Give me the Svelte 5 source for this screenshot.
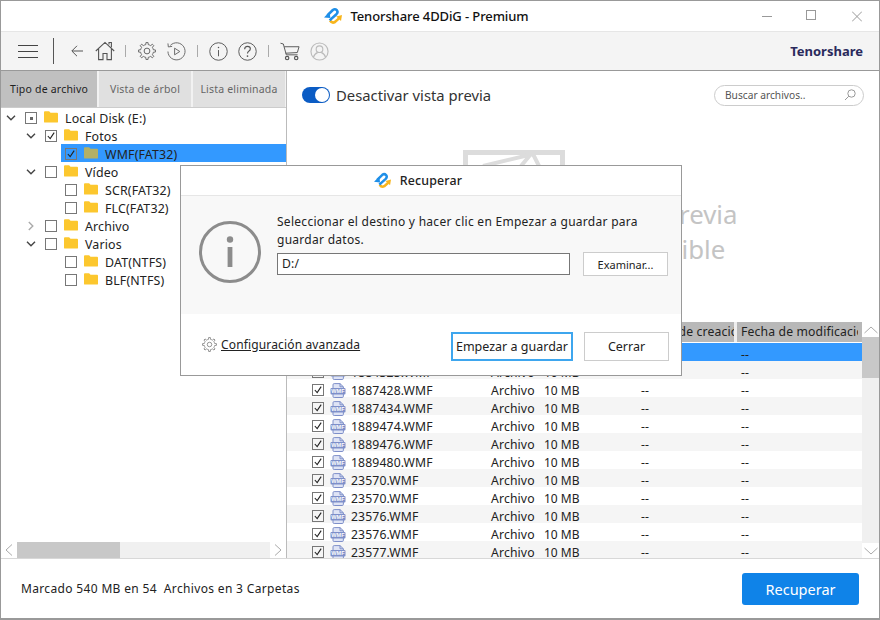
<script lang="ts">
    const tree = [
        { level: 0, chevron: "down", check: "partial", label: "Local Disk (E:)" },
        { level: 1, chevron: "down", check: "on", label: "Fotos" },
        { level: 2, chevron: "", check: "on", label: "WMF(FAT32)", selected: true },
        { level: 1, chevron: "down", check: "off", label: "Vídeo" },
        { level: 2, chevron: "", check: "off", label: "SCR(FAT32)" },
        { level: 2, chevron: "", check: "off", label: "FLC(FAT32)" },
        { level: 1, chevron: "right", check: "off", label: "Archivo" },
        { level: 1, chevron: "down", check: "off", label: "Varios" },
        { level: 2, chevron: "", check: "off", label: "DAT(NTFS)" },
        { level: 2, chevron: "", check: "off", label: "BLF(NTFS)" },
    ];

    const files = [
        "1884321.WMF", "1884325.WMF", "1887428.WMF", "1887434.WMF", "1889474.WMF",
        "1889476.WMF", "1889480.WMF", "23570.WMF", "23570.WMF", "23576.WMF",
        "23576.WMF", "23577.WMF",
    ];

    function gearPath(cx: number, cy: number, r1: number, r2: number, teeth: number) {
        let d = "";
        const step = (Math.PI * 2) / teeth;
        for (let i = 0; i < teeth; i++) {
            const a = i * step;
            const pts = [
                [r2, a - step * 0.5],
                [r2, a - step * 0.25],
                [r1, a - step * 0.14],
                [r1, a + step * 0.14],
                [r2, a + step * 0.25],
            ];
            for (const [r, t] of pts) {
                const x = (cx + r * Math.cos(t)).toFixed(2);
                const y = (cy + r * Math.sin(t)).toFixed(2);
                d += (d ? "L" : "M") + x + " " + y;
            }
        }
        return d + "Z";
    }
</script>

{#snippet logo(size)}
    <svg width={size} height={size} viewBox="0 0 18 18">
        <path d="M6 13.5 Q8 16.6 11 15 L15 11.4" fill="none" stroke="#f8b51c" stroke-width="2.6" />
        <path d="M12.2 9.4 L18 8 L17 14 Z" fill="#f8b51c" />
        <path d="M3.4 8.4 L8.8 3 Q11 1.4 12.8 3.2 Q14.4 5.2 12.4 7.2 L5.6 13.4" fill="none" stroke="#1f8fe8" stroke-width="2.6" />
        <path d="M0 10.4 L5.6 4.8 L6.4 11 Z" fill="#1f8fe8" />
    </svg>
{/snippet}

{#snippet checkbox(state)}
    <span class="cb">
        {#if state === "on"}
            <svg width="10" height="10" viewBox="0 0 11 11"><path d="M2 5.5 L4.6 8.4 L9 1.8" fill="none" stroke="#222" stroke-width="1.2" /></svg>
        {:else if state === "partial"}
            <span class="cb-dot"></span>
        {/if}
    </span>
{/snippet}

{#snippet folder(dim)}
    <svg class="folder" width="14" height="13" viewBox="0 0 15 13">
        <path d="M0 2 Q0 1 1 1 L5.5 1 L7 2.6 L14 2.6 Q15 2.6 15 3.6 L15 12 Q15 13 14 13 L1 13 Q0 13 0 12 Z" fill={dim ? "#b3b066" : "#fcc72e"} />
    </svg>
{/snippet}

{#snippet wmfIcon()}
    <svg class="wmf" width="16" height="15" viewBox="0 0 16 15">
        <path d="M3 13.5 L3 1.8 Q3 .6 4.2 .6 L10 .6 L13.4 3.8 L13.4 13.3 Q13.4 14.5 12.2 14.5 L4.2 14.5 Q3 14.5 3 13.5 Z" fill="#dfe4f5" stroke="#7e8fc9" stroke-width="1" />
        <path d="M10 .6 L10 3.8 L13.4 3.8" fill="none" stroke="#7e8fc9" stroke-width="1" />
        <rect x="0.5" y="5" width="15" height="6.4" rx="1" fill="#7e8fc9" />
        <text x="8" y="10.4" text-anchor="middle" class="wmf-text">WMF</text>
    </svg>
{/snippet}

<div class="app">
    <div class="titlebar">
        <div class="title">
            {@render logo(18)}
            <span>Tenorshare 4DDiG - Premium</span>
        </div>
        <div class="win-buttons">
            <svg width="10" height="12" viewBox="0 0 10 12"><path d="M0 6.5 H10" stroke="#999" fill="none" /></svg>
            <svg width="10" height="12" viewBox="0 0 10 12"><rect x=".5" y=".5" width="9" height="9" stroke="#999" fill="none" /></svg>
            <svg width="10" height="12" viewBox="0 0 10 12"><path d="M0 1.5 L10 11.5 M10 1.5 L0 11.5" stroke="#999" fill="none" /></svg>
        </div>
    </div>

    <div class="toolbar">
        <svg class="tb-menu" width="20" height="13" viewBox="0 0 20 13"><path d="M0 .5 H20 M0 6.5 H20 M0 12.5 H20" stroke="#444" fill="none" /></svg>
        <span class="sep-tall"></span>
        <svg class="tb-back" width="12" height="12" viewBox="0 0 12 12"><path d="M12 6 H1 M6 .8 L.8 6 L6 11.2" stroke="#555" fill="none" /></svg>
        <svg class="tb-home" width="20" height="20" viewBox="0 0 20 20">
            <path d="M.8 10 L10 1.4 L19.2 10 M3.6 8 V18.6 H8 V12.5 H12 V18.6 H16.4 V8 M14 3.6 V1.5 H16.4 V6.2" fill="none" stroke="#555" stroke-width="1.1" />
        </svg>
        <span class="sep s1"></span>
        <svg class="tb-gear" width="18" height="18" viewBox="0 0 20 20">
            <path d={gearPath(10, 10, 9.6, 7.2, 8)} fill="none" stroke="#666" stroke-width="1.1" />
            <circle cx="10" cy="10" r="3.2" fill="none" stroke="#666" stroke-width="1.1" />
        </svg>
        <svg class="tb-replay" width="19" height="19" viewBox="0 0 20 20">
            <path d="M3.5 3.6 A9 9 0 1 1 1 10" fill="none" stroke="#666" />
            <path d="M1 1.5 L1.4 5.2 L5.4 4.6" fill="none" stroke="#666" />
            <path d="M8 6.5 L13.5 10 L8 13.5 Z" fill="none" stroke="#666" />
        </svg>
        <span class="sep s2"></span>
        <svg class="tb-info" width="19" height="19" viewBox="0 0 20 20">
            <circle cx="10" cy="10" r="9.2" fill="none" stroke="#555" />
            <path d="M10 8.5 V15" stroke="#555" fill="none" />
            <circle cx="10" cy="5.8" r=".8" fill="#555" />
        </svg>
        <svg class="tb-help" width="19" height="19" viewBox="0 0 20 20">
            <circle cx="10" cy="10" r="9.2" fill="none" stroke="#555" />
            <path d="M7 7.5 Q7 4.6 10 4.6 Q13 4.6 13 7.2 Q13 8.8 11.3 9.7 Q10 10.4 10 12.2" stroke="#555" stroke-width="1.2" fill="none" />
            <circle cx="10" cy="14.8" r=".9" fill="#555" />
        </svg>
        <span class="sep s3"></span>
        <svg class="tb-cart" width="20" height="19" viewBox="0 0 21 19">
            <path d="M0.5 0.8 L3.5 1.6 L6.6 13 H18.5 M4.5 4.5 H20 L18.2 10.6 L6 11.3" fill="none" stroke="#555" />
            <circle cx="7.5" cy="16.4" r="1.8" fill="none" stroke="#555" stroke-width="1.2" />
            <circle cx="17" cy="16.4" r="1.8" fill="none" stroke="#555" stroke-width="1.2" />
        </svg>
        <svg class="tb-user" width="19" height="19" viewBox="0 0 20 20">
            <circle cx="10" cy="10" r="9" fill="none" stroke="#bbb" stroke-width="1.2" />
            <circle cx="10" cy="7.6" r="3.5" fill="none" stroke="#bbb" stroke-width="1.2" />
            <path d="M3.6 16 Q5 12 8 11.2 M16.4 16 Q15 12 12 11.2" fill="none" stroke="#bbb" stroke-width="1.2" />
        </svg>
        <span class="brand">Tenorshare</span>
    </div>

    <div class="main">
        <aside class="side">
            <div class="tabs">
                <div class="tab active">Tipo de archivo</div>
                <div class="tab">Vista de árbol</div>
                <div class="tab">Lista eliminada</div>
            </div>
            <div class="tree">
                {#each tree as node}
                    <div class="node level-{node.level}">
                        <span class="chev">
                            {#if node.chevron === "down"}
                                <svg width="10" height="6" viewBox="0 0 10 6"><path d="M1 .8 L5 4.8 L9 .8" fill="none" stroke="#444" stroke-width="1.4" /></svg>
                            {:else if node.chevron === "right"}
                                <svg width="6" height="10" viewBox="0 0 6 10"><path d="M.8 1 L4.8 5 L.8 9" fill="none" stroke="#aaa" stroke-width="1.4" /></svg>
                            {/if}
                        </span>
                        <div class="node-body" class:selected={node.selected}>
                            {@render checkbox(node.check)}
                            {@render folder(node.selected)}
                            <span class="node-label">{node.label}</span>
                        </div>
                    </div>
                {/each}
            </div>
            <div class="hscroll">
                <span class="sb-arrow"><svg width="8" height="12" viewBox="0 0 8 12"><path d="M7 .5 L1 6 L7 11.5" fill="none" stroke="#aaa" /></svg></span>
                <span class="hthumb"></span>
                <span class="sb-arrow"><svg width="8" height="12" viewBox="0 0 8 12"><path d="M1 .5 L7 6 L1 11.5" fill="none" stroke="#aaa" /></svg></span>
            </div>
        </aside>

        <section class="content">
            <div class="preview">
                <div class="preview-head">
                    <span class="toggle"><span class="knob"></span></span>
                    <span class="toggle-label">Desactivar vista previa</span>
                    <div class="search">
                        <span>Buscar archivos..</span>
                        <svg width="12" height="12" viewBox="0 0 12 12"><circle cx="7.5" cy="4.5" r="3.7" fill="none" stroke="#999" /><path d="M4.8 7.2 L1 11" stroke="#999" fill="none" /></svg>
                    </div>
                </div>
                <div class="placeholder">
                    <svg width="102" height="34" viewBox="0 0 102 34">
                        <path d="M2.5 34 V2.5 H99.5 V34" fill="none" stroke="#dcdcdc" stroke-width="5" />
                        <path d="M20 16 L70 4 L76 16 M68 4 L58 16" fill="none" stroke="#dcdcdc" stroke-width="4" />
                    </svg>
                    <div class="placeholder-text">Este archivo no admite la vista previa<br />Esta vista previa no está disponible</div>
                </div>
            </div>

            <div class="listing">
                <div class="table">
                    <div class="thead">
                        <div class="th c-name">Nombre</div>
                        <div class="th c-type">Tipo</div>
                        <div class="th c-size">Tamaño</div>
                        <div class="th c-date">Fecha de creación</div>
                        <div class="th c-mod">Fecha de modificación</div>
                    </div>
                    {#each files as file, i}
                        <div class="tr" class:hilite={i === 0} class:alt={i % 2 === 1}>
                            <div class="c-name cell-name">
                                {@render checkbox("on")}
                                {@render wmfIcon()}
                                <span class="fname">{file}</span>
                            </div>
                            <div class="c-type">Archivo</div>
                            <div class="c-size">10 MB</div>
                            <div class="c-date">--</div>
                            <div class="c-mod">--</div>
                        </div>
                    {/each}
                </div>
                <div class="vscroll">
                    <span class="sb-arrow-v"><svg width="14" height="8" viewBox="0 0 14 8"><path d="M.5 7 L7 1 L13.5 7" fill="none" stroke="#aaa" /></svg></span>
                    <span class="vthumb"></span>
                    <span class="vtrack"></span>
                    <span class="sb-arrow-v"><svg width="14" height="8" viewBox="0 0 14 8"><path d="M.5 1 L7 7 L13.5 1" fill="none" stroke="#aaa" /></svg></span>
                </div>
            </div>
        </section>
    </div>

    <div class="footer">
        <span class="summary">Marcado 540 MB en 54&nbsp; Archivos en 3 Carpetas</span>
        <button class="recover">Recuperar</button>
    </div>

    <div class="modal">
        <div class="modal-head">
            {@render logo(17)}
            <span>Recuperar</span>
        </div>
        <div class="modal-body">
            <svg class="big-info" width="62" height="62" viewBox="0 0 62 62">
                <circle cx="31" cy="31" r="29.5" fill="none" stroke="#8c8c8c" stroke-width="3" />
                <rect x="28.6" y="26" width="4.8" height="20" fill="#8c8c8c" />
                <circle cx="31" cy="18.5" r="3.2" fill="#8c8c8c" />
            </svg>
            <div class="modal-form">
                <p>Seleccionar el destino y hacer clic en Empezar a guardar para guardar datos.</p>
                <div class="path-row">
                    <div class="path">D:/</div>
                    <button class="browse">Examinar...</button>
                </div>
            </div>
        </div>
        <div class="modal-foot">
            <svg width="15" height="15" viewBox="0 0 20 20">
                <path d={gearPath(10, 10, 9.5, 7, 8)} fill="none" stroke="#888" stroke-width="1.2" />
                <circle cx="10" cy="10" r="3" fill="none" stroke="#888" stroke-width="1.2" />
            </svg>
            <span class="advanced">Configuración avanzada</span>
            <button class="start">Empezar a guardar</button>
            <button class="close">Cerrar</button>
        </div>
    </div>
</div>

<style>
    :global(body) {
        margin: 0;
        background: #fff;
        overflow: hidden;
    }

    .app {
        position: relative;
        width: 880px;
        height: 620px;
        box-sizing: border-box;
        border: 1px solid #999;
        border-width: 1px 1px 2px 1px;
        display: flex;
        flex-direction: column;
        font-family: "Noto Sans", "Open Sans", sans-serif;
        font-size: 12.2px;
        letter-spacing: .15px;
        color: #222;
        overflow: hidden;
    }

    .titlebar {
        height: 31px;
        flex: none;
        display: flex;
        align-items: center;
        justify-content: center;
        position: relative;
        background: #fff;
        border-bottom: 1px solid #e6e6e6;
        box-sizing: border-box;
        padding-right: 27px;
    }

    .title {
        display: flex;
        align-items: center;
        gap: 8px;
        font-size: 13px;
        letter-spacing: -.1px;
        color: #111;
        font-weight: 500;
    }

    .win-buttons {
        position: absolute;
        right: 17px;
        top: 9px;
        display: flex;
        gap: 36px;
    }

    .win-buttons svg:first-child {
        margin-right: -2px;
    }

    .toolbar {
        height: 38px;
        flex: none;
        display: flex;
        align-items: center;
        background: #f4f4f4;
        border-bottom: 1px solid #999;
        box-sizing: content-box;
        padding: 0 16px 0 17px;
    }

    .sep-tall {
        width: 1px;
        height: 26px;
        background: #555;
        margin: 0 17px 0 15px;
        flex: none;
    }

    .sep {
        width: 1px;
        height: 12px;
        background: #aaa;
        flex: none;
    }

    .s1 {
        margin: 0 12px 0 10px;
    }

    .s2 {
        margin: 0 11px;
    }

    .s3 {
        margin: 0 11px;
    }

    .tb-home {
        margin-left: 12px;
    }

    .tb-replay {
        margin-left: 11px;
    }

    .tb-help {
        margin-left: 10px;
    }

    .tb-user {
        margin-left: 10px;
    }

    .brand {
        margin-left: auto;
        color: #2a2a5c;
        font-weight: 700;
        font-size: 13px;
        letter-spacing: 0;
    }

    .main {
        flex: 1;
        min-height: 0;
        display: flex;
    }

    .side {
        width: 286px;
        flex: none;
        display: flex;
        flex-direction: column;
        border-right: 1px solid #bbb;
        box-sizing: border-box;
    }

    .tabs {
        height: 37px;
        flex: none;
        display: flex;
        border-bottom: 1px solid #ccc;
        box-sizing: border-box;
        gap: 2px;
        background: #f2f2f2;
    }

    .tab {
        display: flex;
        align-items: center;
        justify-content: center;
        background: #e0e0e0;
        color: #666;
        font-size: 10.5px;
        letter-spacing: .2px;
        width: 92px;
    }

    .tab.active {
        width: 96px;
        background: #c0c0c0;
        color: #222;
    }

    .tree {
        flex: 1;
    }

    .node {
        height: 18px;
        display: flex;
        align-items: center;
    }

    .chev {
        width: 12px;
        display: flex;
        justify-content: center;
        flex: none;
        padding-top: 2px;
    }

    .level-0 .chev {
        margin-left: 4px;
    }

    .level-1 .chev {
        margin-left: 24px;
    }

    .level-2 .chev {
        margin-left: 48px;
    }

    .node-body {
        flex: 1;
        height: 18px;
        box-sizing: border-box;
        display: flex;
        align-items: center;
        padding: 2px 0 0 8px;
    }

    .level-2 .node-body {
        padding-left: 4px;
    }

    .node-body.selected {
        background: #3399ff;
    }

    .folder {
        margin: -3px 7px 0 7px;
        flex: none;
    }

    .node-label {
        font-size: 12.4px;
    }

    .cb {
        width: 10px;
        height: 10px;
        flex: none;
        border: 1px solid #777;
        box-sizing: content-box;
        display: inline-flex;
        align-items: center;
        justify-content: center;
        position: relative;
    }

    .cb-dot {
        width: 3px;
        height: 3px;
        background: #666;
    }

    .hscroll {
        height: 16px;
        flex: none;
        display: flex;
        align-items: center;
        background: #f0f0f0;
    }

    .sb-arrow {
        width: 16px;
        height: 16px;
        background: #fff;
        display: flex;
        align-items: center;
        justify-content: center;
        flex: none;
    }

    .hthumb {
        width: 103px;
        height: 16px;
        background: #c8c8c8;
        margin-right: auto;
    }

    .content {
        flex: 1;
        min-width: 0;
        display: flex;
        flex-direction: column;
    }

    .preview {
        height: 251px;
        flex: none;
        overflow: hidden;
    }

    .preview-head {
        height: 48px;
        display: flex;
        align-items: center;
        padding: 0 15px 0 15px;
    }

    .toggle {
        width: 28px;
        height: 16px;
        border-radius: 8px;
        background: #0b5cc4;
        position: relative;
        flex: none;
    }

    .knob {
        position: absolute;
        right: 1px;
        top: 1px;
        width: 14px;
        height: 14px;
        border-radius: 50%;
        background: #fff;
    }

    .toggle-label {
        margin-left: 6px;
        font-size: 14.8px;
        letter-spacing: 0;
        color: #333;
    }

    .search {
        margin-left: auto;
        width: 150px;
        height: 21px;
        box-sizing: border-box;
        border: 1px solid #ccc;
        border-radius: 11px;
        display: flex;
        align-items: center;
        justify-content: space-between;
        padding: 0 7px 0 10px;
        font-size: 10.2px;
        letter-spacing: 0;
        color: #555;
    }

    .placeholder {
        display: flex;
        flex-direction: column;
        align-items: center;
        padding-top: 31px;
        width: 454px;
    }

    .placeholder-text {
        margin-top: 13px;
        font-size: 25.8px;
        line-height: 35px;
        color: #c4c4c4;
        text-align: center;
        white-space: nowrap;
        letter-spacing: 0;
    }

    .listing {
        flex: 1;
        min-height: 0;
        display: flex;
        overflow: hidden;
    }

    .table {
        flex: 1;
        min-width: 0;
        overflow: hidden;
    }

    .thead,
    .tr {
        display: flex;
        height: 18px;
        align-items: center;
    }

    .thead {
        height: 20px;
        margin-bottom: 1px;
        background: #b8b8b8;
        color: #222;
        white-space: nowrap;
    }

    .th {
        height: 100%;
        display: flex;
        align-items: center;
        overflow: hidden;
        border-right: 3px solid #eee;
        box-sizing: border-box;
        padding-left: 4px;
        padding-bottom: 1px;
    }

    .tr {
        background: #fff;
        box-sizing: border-box;
        padding-top: 4px;
    }

    .tr.alt {
        background: #f5f5f5;
    }

    .tr.hilite {
        background: #3399ff;
    }

    .c-name {
        width: 204px;
        flex: none;
    }

    .c-type {
        width: 53px;
        flex: none;
    }

    .c-size {
        width: 97px;
        flex: none;
        letter-spacing: 0;
        font-size: 12px;
    }

    .c-date {
        width: 100px;
        flex: none;
    }

    .c-mod {
        flex: 1;
    }

    .th.c-mod {
        flex: none;
        width: 121px;
        border-right: 0;
    }

    .th.c-date {
        width: 96px;
        padding-left: 0;
    }

    .cell-name {
        display: flex;
        align-items: center;
        padding-left: 25px;
        box-sizing: border-box;
    }

    .wmf {
        margin: 0 5px 0 6px;
        flex: none;
    }

    .wmf-text {
        font-size: 5.5px;
        font-weight: 700;
        fill: #fff;
        font-family: "Liberation Sans", sans-serif;
    }

    .vscroll {
        width: 17px;
        flex: none;
        display: flex;
        flex-direction: column;
        background: #f0f0f0;
    }

    .sb-arrow-v {
        height: 15px;
        background: #fff;
        display: flex;
        align-items: center;
        justify-content: center;
        flex: none;
    }

    .vthumb {
        height: 41px;
        background: #c8c8c8;
        flex: none;
    }

    .vtrack {
        flex: 1;
    }

    .footer {
        height: 60px;
        flex: none;
        display: flex;
        align-items: center;
        justify-content: space-between;
        padding: 0 20px;
        border-top: 1px solid #d8d8d8;
        box-sizing: border-box;
    }

    .summary {
        font-size: 12px;
        letter-spacing: .34px;
    }

    .recover {
        width: 117px;
        height: 32px;
        background: #0f83e8;
        border: 0;
        border-radius: 3px;
        color: #fff;
        font-family: inherit;
        font-size: 14.5px;
    }

    .modal {
        position: absolute;
        left: 179px;
        top: 164px;
        width: 502px;
        height: 211px;
        box-sizing: border-box;
        border: 1px solid #999;
        background: #fff;
        display: flex;
        flex-direction: column;
    }

    .modal-head {
        height: 30px;
        flex: none;
        display: flex;
        align-items: center;
        justify-content: center;
        gap: 9px;
        font-size: 12.4px;
        font-weight: 500;
        border-bottom: 1px solid #e6e6e6;
        box-sizing: border-box;
        padding-right: 26px;
    }

    .modal-body {
        height: 118px;
        flex: none;
        background: #f8f8f8;
        display: flex;
        box-sizing: border-box;
        padding: 25px 13px 0 18px;
    }

    .big-info {
        flex: none;
        margin-right: 16px;
    }

    .modal-form {
        flex: 1;
        min-width: 0;
        margin-top: -8px;
    }

    .modal-form p {
        margin: 0 0 3px;
        font-size: 12px;
        letter-spacing: .28px;
        line-height: 18px;
        color: #222;
    }

    .path-row {
        display: flex;
        justify-content: space-between;
        align-items: center;
    }

    .path {
        width: 293px;
        height: 22px;
        box-sizing: border-box;
        border: 1px solid #777;
        background: #fff;
        padding-left: 4px;
        line-height: 20px;
    }

    .browse {
        width: 85px;
        height: 24px;
        background: #fff;
        border: 1px solid #ccc;
        font-family: inherit;
        font-size: 11px;
        color: #222;
        padding: 0;
    }

    .modal-foot {
        flex: 1;
        display: flex;
        align-items: center;
        padding: 0 12px 0 21px;
    }

    .advanced {
        margin-left: 4px;
        text-decoration: underline;
        font-size: 12px;
        letter-spacing: .15px;
        color: #222;
    }

    .start,
    .close {
        height: 29px;
        margin-top: 3px;
        background: #fff;
        font-family: inherit;
        font-size: 12.5px;
        color: #222;
        padding: 0;
    }

    .start {
        margin-left: auto;
        width: 122px;
        border: 2px solid #3ea6ee;
    }

    .close {
        margin-left: 11px;
        width: 85px;
        border: 1px solid #ccc;
    }
</style>
